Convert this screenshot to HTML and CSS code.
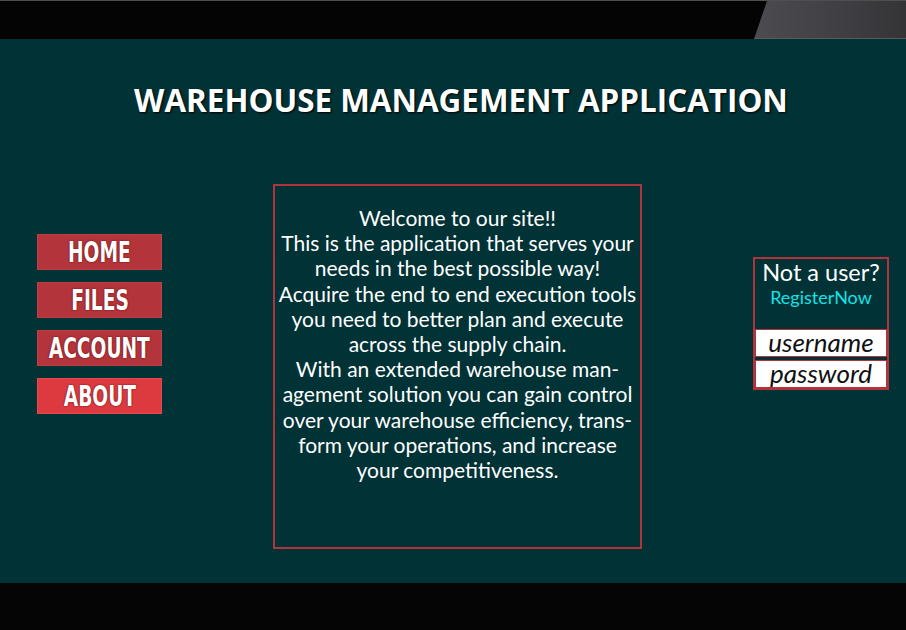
FILE: index.html
```html
<!DOCTYPE html>
<html lang="en">
<head>
<meta charset="utf-8">
<title>Warehouse Management Application</title>
<link rel="stylesheet" href="styles.css">
</head>
<body>
<div class="frame">
  <header class="topbar">
    <div class="tab"></div>
  </header>
  <main class="stage">
    <h1 class="title">WAREHOUSE MANAGEMENT APPLICATION</h1>
    <div class="row">
      <nav class="nav">
        <a class="btn" href="#"><span>HOME</span></a>
        <a class="btn" href="#"><span>FILES</span></a>
        <a class="btn" href="#"><span>ACCOUNT</span></a>
        <a class="btn btn-active" href="#"><span>ABOUT</span></a>
      </nav>
      <section class="welcome">
        <p>Welcome to our site!!<br>
        This is the application that serves your<br>
        needs in the best possible way!<br>
        Acquire the end to end execution tools<br>
        you need to better plan and execute<br>
        across the supply chain.<br>
        With an extended warehouse man-<br>
        agement solution you can gain control<br>
        over your warehouse efficiency, trans-<br>
        form your operations, and increase<br>
        your competitiveness.</p>
      </section>
      <aside class="login">
        <div class="login-head">
          <div class="not-user">Not a user?</div>
          <a class="register" href="#">RegisterNow</a>
        </div>
        <div class="field">username</div>
        <div class="field">password</div>
      </aside>
    </div>
  </main>
  <footer class="bottombar"></footer>
</div>
</body>
</html>
```

FILE: styles.css
```css
html, body {
  margin: 0;
  padding: 0;
  background: #040404;
}
.frame {
  width: 906px;
  height: 630px;
  display: flex;
  flex-direction: column;
  overflow: hidden;
}
.topbar {
  height: 38px;
  border-top: 1px solid #4f4f4f;
  background: #040404;
  display: flex;
  justify-content: flex-end;
  flex: none;
}
.tab {
  width: 152px;
  height: 37px;
  background: linear-gradient(90deg, #4b4b50 0%, #3f3f43 60%, #343437 100%);
  clip-path: polygon(13px 0, 100% 0, 100% 100%, 0 100%);
  border-bottom: 1px solid #5a5a5e;
}
.stage {
  height: 544px;
  flex: none;
  background: #013236;
  display: flex;
  flex-direction: column;
}
.title {
  margin: 42px 0 0 0;
  padding-left: 16px;
  text-align: center;
  font-family: "Open Sans", "Liberation Sans", sans-serif;
  font-weight: 700;
  font-size: 31.4px;
  line-height: 38px;
  color: #ffffff;
  text-shadow: 1px 1px 2px #000000;
}
.row {
  margin-top: 65px;
  display: flex;
  align-items: flex-start;
  padding-left: 37px;
}
.nav {
  width: 125px;
  margin-top: 50px;
  display: flex;
  flex-direction: column;
  gap: 12px;
}
.btn {
  height: 34px;
  background: #b3343a;
  border: 1px solid #c23f44;
  display: flex;
  align-items: center;
  justify-content: center;
  text-decoration: none;
}
.btn span {
  font-family: "Liberation Sans Narrow", "DejaVu Sans Condensed", "Liberation Sans", sans-serif;
  font-weight: 700;
  font-size: 28px;
  color: #ffffff;
  display: inline-block;
  transform: scaleX(0.74);
  text-shadow: 0 0 2px #6d1014, 0 0 1px #6d1014;
}
.btn-active {
  background: #dc3a3e;
  border-color: #e9474b;
}
.welcome {
  margin-left: 111px;
  width: 365px;
  height: 361px;
  border: 2px solid #b0343a;
  box-sizing: content-box;
}
.welcome p {
  margin: 19px 0 0 0;
  text-align: center;
  font-family: "Lato", "Open Sans", sans-serif;
  font-size: 21px;
  line-height: 25.2px;
  color: #ffffff;
}
.login {
  margin-left: 111px;
  margin-top: 73px;
  width: 132px;
  border: 2px solid #b0343a;
  display: flex;
  flex-direction: column;
  gap: 3px;
}
.login-head {
  height: 67px;
  text-align: center;
}
.not-user {
  font-family: "Lato", "Open Sans", sans-serif;
  font-size: 23.5px;
  line-height: 26px;
  color: #ffffff;
}
.register {
  display: block;
  font-family: "Lato", "Open Sans", sans-serif;
  font-size: 18px;
  line-height: 24px;
  color: #14e3e6;
  text-decoration: none;
}
.field {
  height: 26px;
  background: #ffffff;
  border: 1px solid #b0343a;
  font-family: "Lato", "Open Sans", sans-serif;
  font-style: italic;
  font-size: 26px;
  line-height: 25px;
  color: #111111;
  text-align: center;
}
.bottombar {
  flex: 1;
  background: #050505;
}
```
